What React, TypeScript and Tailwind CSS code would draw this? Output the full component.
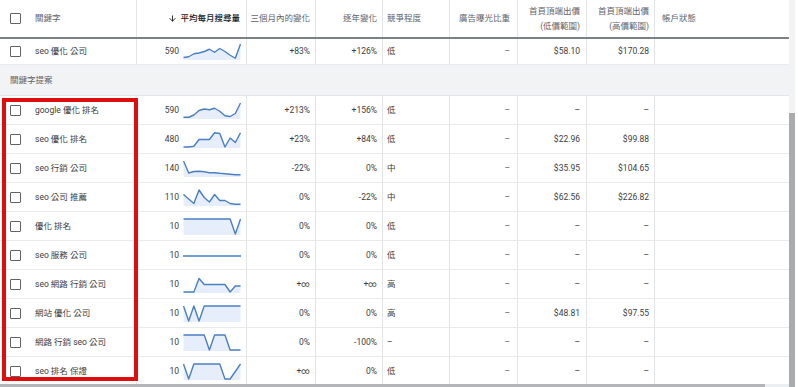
import { ArrowDown } from 'lucide-react';

type Row = {
  kw: string;
  vol: string;
  spark: number[];
  m3: string;
  yoy: string;
  comp: string;
  share: string;
  low: string;
  high: string;
};

const grid =
  'grid grid-cols-[137px_110px_69px_67px_67px_68px_69px_68px_1fr]';
const line = 'border-r border-[#e3e4e6]';

const top: Row = {
  kw: 'seo 優化 公司',
  vol: '590',
  spark: [0.9, 0.85, 0.65, 0.6, 0.5, 0.35, 0.55, 0.3, 0.5, 0.75, 0.95, 0],
  m3: '+83%',
  yoy: '+126%',
  comp: '低',
  share: '–',
  low: '$58.10',
  high: '$170.28',
};

const ideas: Row[] = [
  { kw: 'google 優化 排名', vol: '590', spark: [0.95, 0.95, 0.8, 0.5, 0.4, 0.45, 0.35, 0.55, 0.85, 0.9, 0.7, 0], m3: '+213%', yoy: '+156%', comp: '低', share: '–', low: '–', high: '–' },
  { kw: 'seo 優化 排名', vol: '480', spark: [1, 1, 0.95, 0.5, 0.5, 0.5, 0.05, 0.1, 1, 0.4, 0.7, 0.05], m3: '+23%', yoy: '+84%', comp: '低', share: '–', low: '$22.96', high: '$99.88' },
  { kw: 'seo 行銷 公司', vol: '140', spark: [0, 0.8, 0.7, 0.68, 0.72, 0.78, 0.78, 0.82, 0.85, 0.88, 0.92, 0.92], m3: '-22%', yoy: '0%', comp: '中', share: '–', low: '$35.95', high: '$104.65' },
  { kw: 'seo 公司 推薦', vol: '110', spark: [0.3, 0.6, 0.9, 0, 0.5, 0.8, 0.3, 0.7, 0.7, 0.9, 0.95, 0.95], m3: '0%', yoy: '-22%', comp: '中', share: '–', low: '$62.56', high: '$226.82' },
  { kw: '優化 排名', vol: '10', spark: [0, 0, 0, 0, 0, 0, 0, 0, 0, 0, 1, 0], m3: '0%', yoy: '0%', comp: '低', share: '–', low: '–', high: '–' },
  { kw: 'seo 服務 公司', vol: '10', spark: [], m3: '0%', yoy: '0%', comp: '低', share: '–', low: '–', high: '–' },
  { kw: 'seo 網路 行銷 公司', vol: '10', spark: [1, 1, 1, 0.1, 0.5, 0.5, 0.5, 0.5, 0.5, 1, 0.6, 0.6], m3: '+∞', yoy: '+∞', comp: '高', share: '–', low: '–', high: '–' },
  { kw: '網站 優化 公司', vol: '10', spark: [0, 1, 0, 1, 0, 0, 0, 0, 0, 0, 0, 0], m3: '0%', yoy: '0%', comp: '高', share: '–', low: '$48.81', high: '$97.55' },
  { kw: '網路 行銷 seo 公司', vol: '10', spark: [0, 0, 0, 0, 0, 1, 0, 0, 0, 1, 1, 1], m3: '0%', yoy: '-100%', comp: '–', share: '–', low: '–', high: '–' },
  { kw: 'seo 排名 保證', vol: '10', spark: [0, 1, 0, 0, 0, 0, 0, 0, 1, 1, 0.5, 0], m3: '+∞', yoy: '0%', comp: '低', share: '–', low: '–', high: '–' },
];

function Checkbox() {
  return <span className="block w-[11px] h-[11px] shrink-0 border-[1.5px] border-[#5f6368] rounded-[1px]" />;
}

function Spark({ data }: { data: number[] }) {
  const w = 58;
  const h = 17;
  if (data.length === 0) {
    return (
      <svg width={w} height={h}>
        <line x1="0" y1="9" x2={w} y2="9" stroke="#4b7fc4" strokeWidth="1.4" />
      </svg>
    );
  }
  const pts = data.map((v, i) => [(i * (w - 1)) / (data.length - 1) + 0.5, 1 + v * (h - 2)]);
  const d = pts.map((p) => p.join(',')).join(' ');
  return (
    <svg width={w} height={h}>
      <polygon points={`${d} ${w - 0.5},${h} 0.5,${h}`} fill="#e6eefb" />
      <polyline points={d} fill="none" stroke="#4b7fc4" strokeWidth="1.4" strokeLinejoin="round" />
    </svg>
  );
}

function DataRow({ r, tall }: { r: Row; tall?: boolean }) {
  return (
    <div className={`${grid} ${tall ? 'h-[29px]' : 'h-[26px]'} border-b border-[#e8eaed]`}>
      <div className={`flex items-center pl-[10px] ${line}`}>
        <Checkbox />
        <span className="ml-[14px] whitespace-nowrap">{r.kw}</span>
      </div>
      <div className={`flex items-center justify-end gap-[4px] pr-[5px] ${line}`}>
        <span>{r.vol}</span>
        <Spark data={r.spark} />
      </div>
      <div className={`flex items-center justify-end pr-[5px] ${line}`}>{r.m3}</div>
      <div className={`flex items-center justify-end pr-[5px] ${line}`}>{r.yoy}</div>
      <div className={`flex items-center pl-[4px] ${line}`}>{r.comp}</div>
      <div className={`flex items-center justify-end pr-[7px] text-[#5f6368] ${line}`}>{r.share}</div>
      <div className={`flex items-center justify-end pr-[6px] ${line}`}>{r.low}</div>
      <div className={`flex items-center justify-end pr-[5px] ${line}`}>{r.high}</div>
      <div />
    </div>
  );
}

export default function App() {
  return (
    <div className="w-[798px] h-[387px] overflow-hidden bg-white flex font-['Roboto','Noto_Sans_CJK_TC',sans-serif] text-[8.5px] text-[#3c4043]">
      <div className="w-[789px] flex flex-col">
        <div className="flex-1 overflow-hidden">
          {/* 表頭 */}
          <div className={`${grid} h-[39px] border-b-2 border-[#7d8185] text-[#5f6368] leading-[15px]`}>
            <div className={`flex items-center pl-[10px] ${line}`}>
              <Checkbox />
              <span className="ml-[14px]">關鍵字</span>
            </div>
            <div className={`flex items-center justify-end gap-[3px] pr-[6px] font-medium text-[#202124] ${line}`}>
              <ArrowDown size={9} strokeWidth={2.5} />
              <span>平均每月搜尋量</span>
            </div>
            <div className={`flex items-center justify-end pr-[5px] whitespace-nowrap overflow-hidden ${line}`}>三個月內的變化</div>
            <div className={`flex items-center justify-end pr-[5px] ${line}`}>逐年變化</div>
            <div className={`flex items-center pl-[4px] ${line}`}>競爭程度</div>
            <div className={`flex items-center justify-end pr-[7px] ${line}`}>廣告曝光比重</div>
            <div className={`flex flex-col justify-center items-end pr-[6px] ${line}`}>
              <span>首頁頂端出價</span>
              <span>(低價範圍)</span>
            </div>
            <div className={`flex flex-col justify-center items-end pr-[5px] ${line}`}>
              <span>首頁頂端出價</span>
              <span>(高價範圍)</span>
            </div>
            <div className="flex items-center pl-[7px]">帳戶狀態</div>
          </div>

          <DataRow r={top} />

          {/* 關鍵字提案 */}
          <div className="h-[31px] flex items-center pl-[10px] bg-[#f1f3f4] border-b border-[#e3e5e8] text-[#5f6368]">
            關鍵字提案
          </div>

          <div className="relative">
            {ideas.map((r) => (
              <DataRow key={r.kw} r={r} tall />
            ))}
            <div className="absolute left-[2px] top-[2px] w-[136px] h-[283px] border-4 border-[#e00d0d]" />
          </div>
        </div>
        <div className="h-[3px] flex">
          <div className="w-[765px] bg-[#b3b5b8]" />
          <div className="flex-1 bg-[#eceff1]" />
        </div>
      </div>
      {/* 捲軸 */}
      <div className="w-[9px] flex">
        <div className="w-[6px] flex flex-col bg-[#f3f3f3]">
          <div className="h-[113px]" />
          <div className="flex-1 bg-[#a9abad]" />
        </div>
      </div>
    </div>
  );
}
